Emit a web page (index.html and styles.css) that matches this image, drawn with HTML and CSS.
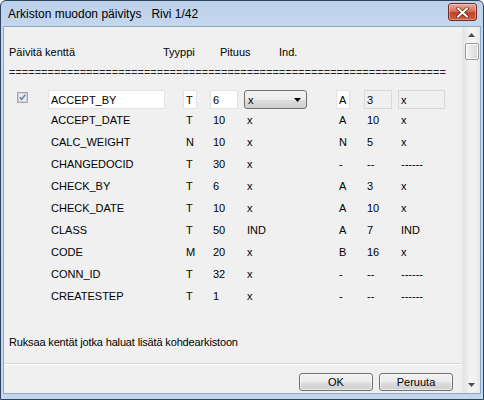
FILE: index.html
```html
<!DOCTYPE html>
<html lang="fi">
<head>
    <meta charset="UTF-8">
    <meta name="viewport" content="width=device-width, initial-scale=1.0">
    <link rel="stylesheet" href="styles.css">
    <title>Arkiston muodon päivitys</title>
</head>
<body>
    <div class="window">
        <div class="titlebar">
            <span class="title">Arkiston muodon päivitys&nbsp;&nbsp;&nbsp;Rivi 1/42</span>
            <button class="close-btn" aria-label="Sulje">
                <svg width="13" height="11" viewBox="0 0 13 11">
                    <path d="M2 1.5 L11 9.5 M11 1.5 L2 9.5" stroke="#5a1a10" stroke-width="3.4" stroke-linecap="square"/>
                    <path d="M2 1.5 L11 9.5 M11 1.5 L2 9.5" stroke="#fff" stroke-width="2" stroke-linecap="square"/>
                </svg>
            </button>
        </div>
        <div class="client">
            <div class="content">
                <div class="header">
                    <span>Päivitä kenttä</span>
                    <span>Tyyppi</span>
                    <span>Pituus</span>
                    <span>Ind.</span>
                </div>
                <div class="separator">====================================================================</div>

                <div class="rows">
                    <div class="row row-edit">
                        <span class="check">
                            <svg width="11" height="11" viewBox="0 0 11 11">
                                <rect x="0.5" y="0.5" width="10" height="10" fill="#f4f4f4" stroke="#a6a6a6"/>
                                <rect x="1.5" y="1.5" width="8" height="8" fill="#e6e9ee" stroke="#d4d8de"/>
                                <path d="M2.8 5.2 L4.6 7.4 L8.3 2.8" fill="none" stroke="#6d7f9c" stroke-width="1.5"/>
                            </svg>
                        </span>
                        <span class="cell"><span class="field field-name">ACCEPT_BY</span></span>
                        <span class="cell"><span class="field field-type">T</span></span>
                        <span class="cell"><span class="field field-len">6</span></span>
                        <span class="cell">
                            <span class="select">x
                                <svg width="7" height="4" viewBox="0 0 7 4"><path d="M0 0 H7 L3.5 4 Z" fill="#000"/></svg>
                            </span>
                        </span>
                        <span class="cell"><span class="field field-type">A</span></span>
                        <span class="cell"><span class="field field-len grey">3</span></span>
                        <span class="cell"><span class="field field-ind grey">x</span></span>
                    </div>

                    <div class="row">
                        <span></span><span class="cell">ACCEPT_DATE</span><span class="cell">T</span><span class="cell">10</span>
                        <span class="cell">x</span><span class="cell">A</span><span class="cell">10</span><span class="cell">x</span>
                    </div>
                    <div class="row">
                        <span></span><span class="cell">CALC_WEIGHT</span><span class="cell">N</span><span class="cell">10</span>
                        <span class="cell">x</span><span class="cell">N</span><span class="cell">5</span><span class="cell">x</span>
                    </div>
                    <div class="row">
                        <span></span><span class="cell">CHANGEDOCID</span><span class="cell">T</span><span class="cell">30</span>
                        <span class="cell">x</span><span class="cell">-</span><span class="cell">--</span><span class="cell">------</span>
                    </div>
                    <div class="row">
                        <span></span><span class="cell">CHECK_BY</span><span class="cell">T</span><span class="cell">6</span>
                        <span class="cell">x</span><span class="cell">A</span><span class="cell">3</span><span class="cell">x</span>
                    </div>
                    <div class="row">
                        <span></span><span class="cell">CHECK_DATE</span><span class="cell">T</span><span class="cell">10</span>
                        <span class="cell">x</span><span class="cell">A</span><span class="cell">10</span><span class="cell">x</span>
                    </div>
                    <div class="row">
                        <span></span><span class="cell">CLASS</span><span class="cell">T</span><span class="cell">50</span>
                        <span class="cell">IND</span><span class="cell">A</span><span class="cell">7</span><span class="cell">IND</span>
                    </div>
                    <div class="row">
                        <span></span><span class="cell">CODE</span><span class="cell">M</span><span class="cell">20</span>
                        <span class="cell">x</span><span class="cell">B</span><span class="cell">16</span><span class="cell">x</span>
                    </div>
                    <div class="row">
                        <span></span><span class="cell">CONN_ID</span><span class="cell">T</span><span class="cell">32</span>
                        <span class="cell">x</span><span class="cell">-</span><span class="cell">--</span><span class="cell">------</span>
                    </div>
                    <div class="row">
                        <span></span><span class="cell">CREATESTEP</span><span class="cell">T</span><span class="cell">1</span>
                        <span class="cell">x</span><span class="cell">-</span><span class="cell">--</span><span class="cell">------</span>
                    </div>
                </div>

                <div class="hint">Ruksaa kentät jotka haluat lisätä kohdearkistoon</div>

                <div class="footer">
                    <button class="btn">OK</button>
                    <button class="btn">Peruuta</button>
                </div>
            </div>

            <div class="scrollbar">
                <div class="arrow">
                    <svg width="7" height="4" viewBox="0 0 7 4"><path d="M0 4 H7 L3.5 0 Z" fill="#4d4d4d"/></svg>
                </div>
                <div class="thumb"></div>
                <div class="track"></div>
                <div class="arrow">
                    <svg width="7" height="4" viewBox="0 0 7 4"><path d="M0 0 H7 L3.5 4 Z" fill="#4d4d4d"/></svg>
                </div>
            </div>
        </div>
    </div>
</body>
</html>
```

FILE: styles.css
```css
body {
    margin: 0;
    padding: 0;
    font-family: 'Liberation Sans', Arial, sans-serif;
    font-size: 11px;
    color: #000;
    background-color: #fff;
}

.window {
    width: 484px;
    height: 400px;
    box-sizing: border-box;
    border: 1px solid #2a4462;
    border-radius: 6px 6px 0 0;
    background: linear-gradient(#bcd1ea, #c9daef 40px, #c3d6ec);
    padding: 0 3px 6px 3px;
    display: flex;
    flex-direction: column;
}

.titlebar {
    height: 26px;
    flex-shrink: 0;
    display: flex;
    align-items: center;
    justify-content: space-between;
    padding: 0 3px 0 4px;
}

.title {
    font-size: 12px;
    color: #000;
    padding-bottom: 1px;
}

.close-btn {
    width: 29px;
    height: 18px;
    margin-bottom: 4px;
    padding: 0;
    border: 1px solid #6b2b22;
    border-radius: 3px;
    background: linear-gradient(#e9a899, #d7715d 45%, #c2402a 55%, #d35f3f);
    box-shadow: inset 0 0 0 1px rgba(255, 255, 255, 0.35);
    display: flex;
    align-items: center;
    justify-content: center;
}

.client {
    flex: 1;
    display: flex;
    background-color: #f0f0f0;
    box-shadow: 0 0 0 1px #8ea6c3;
}

.content {
    flex: 1;
    display: flex;
    flex-direction: column;
}

.header {
    display: grid;
    grid-template-columns: 154px 57px 59px auto;
    padding: 18px 0 0 5px;
    line-height: 14px;
}

.separator {
    margin: 6px 0 0 5px;
    line-height: 14px;
    white-space: nowrap;
    color: #222;
}

.rows {
    margin-top: 11px;
}

.row {
    display: grid;
    grid-template-columns: 44px 135px 27px 34px 92px 28px 34px 48px;
    align-items: center;
    height: 22px;
    line-height: 14px;
}

.row-edit {
    height: 19px;
}

.cell {
    padding-left: 3px;
}

.row-edit .cell {
    padding-left: 0;
}

.check {
    align-self: start;
    margin: 2px 0 0 13px;
    height: 11px;
}

.field {
    display: block;
    box-sizing: border-box;
    height: 19px;
    padding: 2px 0 0 2px;
    border: 1px solid #e2e3ea;
    background-color: #fff;
}

.field.grey {
    background-color: #f0f0f0;
    border-color: #d9d9d9;
}

.field-name {
    width: 117px;
}

.field-type {
    width: 14px;
}

.field-len {
    width: 28px;
}

.field-ind {
    width: 47px;
}

.select {
    display: flex;
    align-items: center;
    justify-content: space-between;
    box-sizing: border-box;
    width: 63px;
    height: 19px;
    padding: 0 5px 0 3px;
    border: 1px solid #707070;
    border-radius: 3px;
    background: linear-gradient(#f2f2f2, #ebebeb 50%, #dddddd 51%, #cfcfcf);
}

.hint {
    margin: 28px 0 0 5px;
    line-height: 14px;
    letter-spacing: -0.15px;
}

.footer {
    margin-top: auto;
    border-top: 1px solid #d8d8d8;
    box-shadow: inset 0 1px 0 #fff;
    display: flex;
    justify-content: flex-end;
    gap: 6px;
    padding: 9px 9px 0 0;
    box-sizing: border-box;
    height: 30px;
}

.btn {
    width: 74px;
    height: 18px;
    padding: 0;
    font-family: 'Liberation Sans', Arial, sans-serif;
    font-size: 11px;
    color: #000;
    border: 1px solid #707070;
    border-radius: 3px;
    background: linear-gradient(#f2f2f2, #ebebeb 50%, #dddddd 51%, #cfcfcf);
    box-shadow: inset 0 0 0 1px rgba(255, 255, 255, 0.6);
}

.scrollbar {
    width: 17px;
    display: flex;
    flex-direction: column;
    background: linear-gradient(90deg, #e3e3e3, #f2f2f2 40%, #f2f2f2 70%, #e8e8e8);
    border-left: 1px solid #e8e8e8;
}

.arrow {
    height: 16px;
    display: flex;
    align-items: center;
    justify-content: center;
}

.thumb {
    height: 15px;
    margin: 0 1px 0 2px;
    border: 1px solid #9b9b9b;
    border-radius: 2px;
    background: linear-gradient(90deg, #f3f3f3, #e6e6e6 50%, #d6d6d6);
    box-shadow: inset 0 0 0 1px #fff;
}

.track {
    flex: 1;
}
```
